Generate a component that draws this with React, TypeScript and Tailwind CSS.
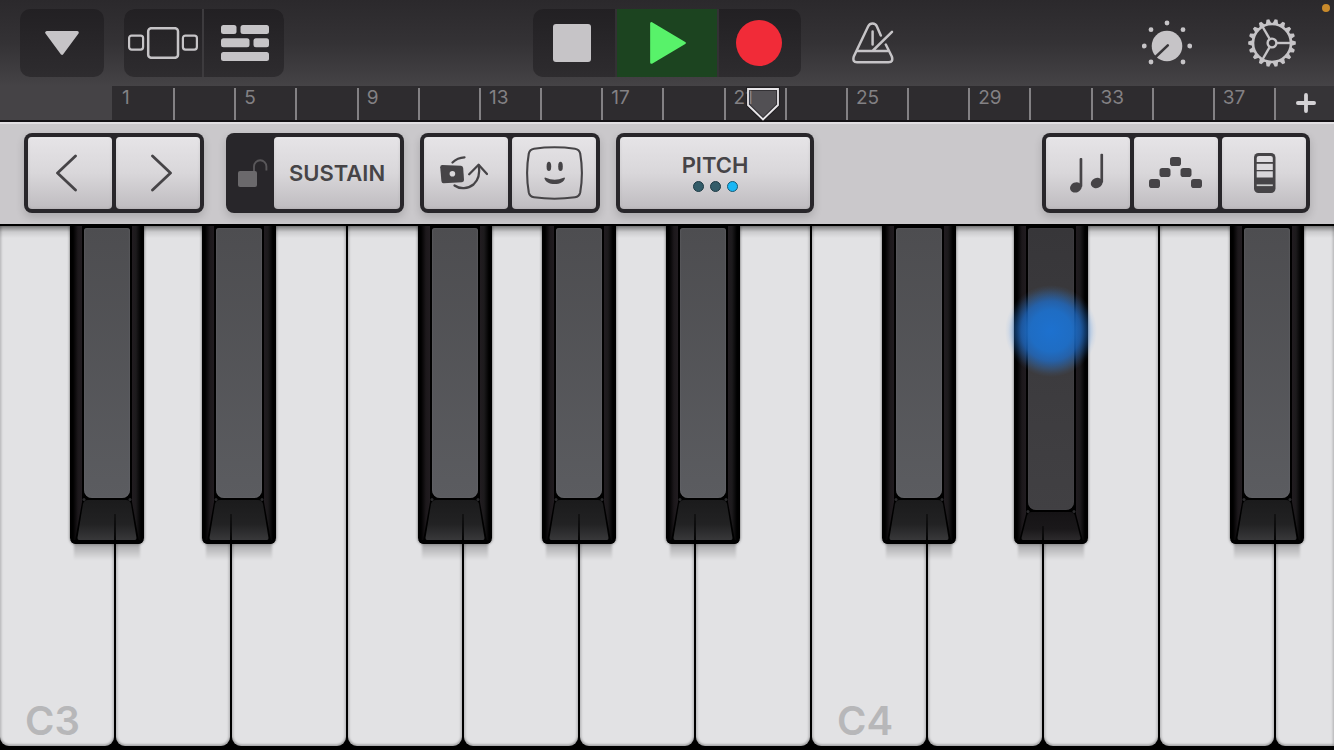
import React from "react";

const ICON = "#c6c4c7";
const DARK = "#464447";

const RULER_CELLS = Array.from({ length: 19 }, (_, i) => i);

const WHITE_KEYS = ["C3", "D3", "E3", "F3", "G3", "A3", "B3", "C4", "D4", "E4", "F4"];

// Horizontal offsets on a keyboard that spans 1334 units; seam is the gap of the white keys below.
const SPAN = 1334;
const BLACK_KEYS = [
  { name: "C#3", x: 70, seam: 45 },
  { name: "D#3", x: 202, seam: 29 },
  { name: "F#3", x: 418, seam: 45 },
  { name: "G#3", x: 542, seam: 37 },
  { name: "A#3", x: 666, seam: 29 },
  { name: "C#4", x: 882, seam: 45 },
  { name: "D#4", x: 1014, seam: 29, pressed: true },
  { name: "F#4", x: 1230, seam: 45 },
];

function GearIcon() {
  const teeth = Array.from({ length: 18 }, (_, i) => i * 20);
  return (
    <svg width="50" height="50" viewBox="-25 -25 50 50" fill="none" stroke={ICON}>
      <circle r="19" strokeWidth="2.6" />
      {teeth.map((a) => (
        <path key={a} d="M19 -2.9 L23.8 -1.4 V1.4 L19 2.9Z" fill={ICON} stroke="none" transform={`rotate(${a})`} />
      ))}
      <circle r="4.4" strokeWidth="2.4" />
      {[0, 120, 240].map((a) => (
        <path key={a} d="M5 0H18.5" strokeWidth="2.4" transform={`rotate(${a})`} />
      ))}
    </svg>
  );
}

function KnobIcon() {
  const dots = [[0, -23], [-16, -16.3], [16, -16.3], [-22.7, 0], [22.7, 0], [-16, 16], [16, 16]];
  return (
    <svg width="50" height="46" viewBox="-25 -26 50 46" fill={ICON}>
      <circle r="15.3" />
      {dots.map(([x, y]) => (
        <circle key={`${x},${y}`} cx={x} cy={y} r="2.4" />
      ))}
      <path d="M0.8 -0.6L-12.5 12" stroke="#39373a" strokeWidth="2.6" strokeLinecap="round" />
    </svg>
  );
}

function MetronomeIcon() {
  return (
    <svg width="42" height="42" viewBox="0 0 42 42" fill="none" stroke={ICON} strokeWidth="2.5" strokeLinecap="round" strokeLinejoin="round">
      <path d="M28.8 13.5L24.8 4.2Q23.6 1.4 20.6 1.4T16.2 4.2L1.8 34.5Q0.2 40.2 5 40.2H36.6Q41.6 40.2 39.8 34.5L33.8 22.5" />
      <path d="M5.5 29H35.5M20.6 9.5V22.5M21 28.5L40 9.8" />
    </svg>
  );
}

function CameraFlipIcon() {
  return (
    <svg width="48" height="34" viewBox="0 0 48 34" fill="none" stroke={DARK} strokeWidth="2.3" strokeLinecap="round" strokeLinejoin="round">
      <path d="M2.3 9L21 9.8Q23 10 23.2 12L24 24Q24 26 22 26.2L3.5 27.2Q1.6 27.2 1.4 25L0.2 11.2Q0.2 9 2.3 9Z" fill={DARK} stroke="none" />
      <circle cx="12.4" cy="17.8" r="2.8" fill="#dad8db" stroke="none" />
      <path d="M12.5 6.5Q17.5 1.7 24.5 1.4" />
      <path d="M14.5 29.5C20 33.5 28 33 33.5 28.5C38.5 24 40 17 38.8 9.5" />
      <path d="M29.2 18.2L38.6 8.8L47 18" />
    </svg>
  );
}

function FaceIcon() {
  return (
    <svg width="57" height="54" viewBox="0 0 57 54" fill="none" stroke={DARK} strokeWidth="2.1">
      <path d="M8 2.7Q28.5 -0.2 49 2.7Q53.3 3.4 54.2 7.5Q57.6 27 54.2 46.5Q53.3 50.6 49 51.3Q28.5 54.2 8 51.3Q3.7 50.6 2.8 46.5Q-0.6 27 2.8 7.5Q3.7 3.4 8 2.7Z" />
      <g fill={DARK} stroke="none">
        <ellipse cx="22.9" cy="20.4" rx="2.3" ry="4.6" />
        <ellipse cx="34.5" cy="20.4" rx="2.3" ry="4.6" />
        <path d="M18.4 32.2Q18.6 31.2 19.8 31.7Q28.7 35.6 37.6 31.7Q38.8 31.2 39 32.2C38 35.8 34 38 28.7 38S19.4 35.800 18.4 32.2Z" />
      </g>
    </svg>
  );
}

function LockIcon() {
  return (
    <svg width="30" height="28" viewBox="0 0 30 28" fill="none" aria-hidden="true">
      <rect y="12" width="19" height="16" rx="2" fill="#6b696c" />
      <path d="M16 12V7.500A6.200 6.200 0 0 1 28.400 7.500V11.500" stroke="#59575a" strokeWidth="1.900" />
    </svg>
  );
}

function NotesIcon() {
  return (
    <svg width="34" height="40" viewBox="0 0 34 40" fill={DARK}>
      <ellipse cx="5.9" cy="34.4" rx="6" ry="5" transform="rotate(-25 5.9 34.4)" />
      <rect x="9.6" y="5" width="2.7" height="29" rx="1" />
      <ellipse cx="26.7" cy="30" rx="6" ry="5" transform="rotate(-25 26.7 30)" />
      <rect x="30.4" y="0.7" width="2.7" height="29" rx="1" />
    </svg>
  );
}

function ArpeggioIcon() {
  const steps = [[0, 23], [10.5, 12], [21, 1], [31.5, 12], [42, 23]];
  return (
    <svg width="53" height="35" viewBox="0 0 53 35" fill={DARK}>
      {steps.map(([x, y]) => (
        <rect key={x} x={x} y={y} width="11" height="9" rx="2.8" />
      ))}
    </svg>
  );
}

function KeyboardSizeIcon() {
  return (
    <svg width="22" height="40" viewBox="0 0 22 40">
      <rect width="21.5" height="40" rx="4.5" fill={DARK} />
      <path d="M5 2.9H16.5Q18.8 2.9 18.8 5V9H2.7V5Q2.7 2.9 5 2.9Z" fill="#e0dee1" />
      <rect x="2.7" y="10.800" width="16.1" height="6.2" fill="#dcdadd" />
      <rect x="2.7" y="18.3" width="16.1" height="6.2" fill="#d8d6d9" />
      <rect x="2.7" y="31.4" width="16.1" height="1.7" fill="#ccc" />
    </svg>
  );
}

function HeaderButton({ label, className = "", children }: { label: string; className?: string; children: React.ReactNode }) {
  return (
    <button type="button" aria-label={label} className={`flex h-[68px] items-center justify-center ${className}`}>
      {children}
    </button>
  );
}

function Header() {
  const dark = "bg-linear-to-b from-[#222023] to-[#2e2c2f]";
  return (
    <header className="relative grid grid-cols-[1fr_auto_1fr] items-center bg-linear-to-b from-[#2b292c] via-[#343235] to-[#454346] py-[9px]">
      <div className="flex gap-5 pl-5">
        <HeaderButton label="Navigation menu" className={`w-[84px] rounded-[10px] ${dark}`}>
          <svg width="34" height="24" viewBox="0 0 34 24" fill={ICON} stroke={ICON} strokeWidth="3" strokeLinejoin="round">
            <path d="M1.7 1.6H32.3L17 22.3Z" />
          </svg>
        </HeaderButton>
        <div className="flex gap-[2px] overflow-hidden rounded-[10px] bg-[#3d3b3e]">
          <HeaderButton label="Sound browser" className={`w-[78px] ${dark}`}>
            <svg width="70" height="32" viewBox="0 0 70 32" fill="none" stroke={ICON} strokeWidth="2.2">
              <rect x="1.1" y="8.6" width="14" height="14" rx="2.5" />
              <rect x="20.2" y="1.2" width="29.8" height="29.6" rx="3" strokeWidth="2.5" />
              <rect x="54.9" y="8.6" width="14" height="14" rx="2.5" />
            </svg>
          </HeaderButton>
          <HeaderButton label="Tracks view" className={`w-[80px] pl-[2px] ${dark}`}>
            <svg width="48" height="36" viewBox="0 0 48 36" fill={ICON}>
              <rect width="15.5" height="9" rx="2.5" />
              <rect x="19.5" width="28.5" height="9" rx="2.5" />
              <rect y="13.3" width="28.5" height="9" rx="2.5" />
              <rect x="32.5" y="13.3" width="15.5" height="9" rx="2.5" />
              <rect y="27" width="48" height="9" rx="2.5" />
            </svg>
          </HeaderButton>
        </div>
      </div>

      <div className="flex gap-[2px] overflow-hidden rounded-[10px] bg-[#333134]">
        <HeaderButton label="Stop" className={`w-[82px] pr-1 ${dark}`}>
          <svg width="38" height="38" viewBox="0 0 38 38">
            <rect width="38" height="38" rx="3" fill={ICON} />
          </svg>
        </HeaderButton>
        <HeaderButton label="Play" className="w-[100px] bg-[#1c4420] pl-[2px]">
          <svg width="36" height="42" viewBox="0 0 36 42" fill="#58f26a" stroke="#58f26a" strokeWidth="2.5" strokeLinejoin="round">
            <path d="M1.4 1.4V40.6L34.6 21Z" />
          </svg>
        </HeaderButton>
        <HeaderButton label="Record" className={`w-[82px] pr-[2px] ${dark}`}>
          <svg width="46" height="46" viewBox="0 0 46 46">
            <circle cx="23" cy="23" r="23" fill="#f12b38" />
          </svg>
        </HeaderButton>
      </div>

      <div className="flex items-center pr-[37px] pl-[50px]">
        <HeaderButton label="Metronome" className="w-[44px]">
          <MetronomeIcon />
        </HeaderButton>
        <div className="ml-auto flex gap-[55px]">
          <HeaderButton label="Track controls">
            <KnobIcon />
          </HeaderButton>
          <HeaderButton label="Song settings">
            <GearIcon />
          </HeaderButton>
        </div>
      </div>
      <span className="absolute top-1 right-1 size-2 rounded-full bg-[#c98a2b]" />
    </header>
  );
}

function Ruler() {
  return (
    <div className="flex h-9 border-b-2 border-[#141215] bg-[#454346] pl-28">
      <div className="relative flex flex-1 bg-[#2e2c2f]">
        {RULER_CELLS.map((i) => (
          <div key={i} className="relative flex-1">
            {i > 0 && <span className="absolute top-[2px] bottom-0 left-0 w-[2px] bg-[#838184]" />}
            {i % 2 === 0 && <span className="block pl-[10px] text-[19px] leading-6 text-[#838184]">{i * 2 + 1}</span>}
          </div>
        ))}
        <svg className="absolute top-px left-[54.6%]" width="34" height="34" viewBox="0 0 34 34" aria-hidden="true">
          <path d="M2 2H32V18L17 32.5L2 18Z" fill="#8a888b" fillOpacity=".4" stroke="#141215" strokeWidth="4" strokeOpacity=".5" />
          <path d="M2 2H32V18L17 32.5L2 18Z" fill="none" stroke="#e8e6e9" strokeWidth="1.8" />
        </svg>
      </div>
      <button type="button" aria-label="Add section" className="relative flex w-[60px] items-center justify-center bg-[#363437] pl-1">
        <span className="absolute top-[2px] bottom-0 left-0 w-[2px] bg-[#838184]" />
        <svg width="20" height="20" viewBox="0 0 20 20" stroke="#d4d2d5" strokeWidth="3.8" strokeLinecap="round">
          <path d="M10 1.900V18.100M1.900 10H18.100" />
        </svg>
      </button>
    </div>
  );
}

function Group({ children }: { children: React.ReactNode }) {
  return (
    <div className="flex gap-1 rounded-lg bg-[#28262a] p-1 shadow-[0_4px_8px_rgba(0,0,0,0.16)]">{children}</div>
  );
}

function PadButton({ label, className = "w-[84px]", children }: { label: string; className?: string; children: React.ReactNode }) {
  return (
    <button
      type="button"
      aria-label={label}
      className={`flex h-[72px] flex-col items-center justify-center rounded-[4px] bg-linear-to-b from-[#e6e4e7] via-[#d9d7da] to-[#bfbcc0] text-[22px] leading-6 font-semibold text-[#464447] shadow-[inset_0_2px_2px_rgba(255,255,255,0.35),inset_0_0_3px_rgba(0,0,0,0.12)] ${className}`}
    >
      {children}
    </button>
  );
}

function Toolbar() {
  const chevron = { width: 21, height: 38, viewBox: "0 0 21 38", fill: "none", stroke: DARK, strokeWidth: 2.8, strokeLinecap: "round" as const, strokeLinejoin: "round" as const };
  return (
    <nav className="flex border-t-2 border-b-2 border-t-[#e2e0e3] border-b-black bg-[#cac8cb] px-6 pt-[9px] pb-[11px]">
      <Group>
        <PadButton label="Previous instrument">
          <svg {...chevron} className="mr-2"><path d="M19.500 2L1.500 19L19.500 36" /></svg>
        </PadButton>
        <PadButton label="Next instrument">
          <svg {...chevron} className="ml-1.5"><path d="M1.500 2L19.500 19L1.500 36" /></svg>
        </PadButton>
      </Group>
      <div className="ml-[22px] flex">
        <Group>
          <div className="flex w-10 items-center justify-center pl-1.5">
            <LockIcon />
          </div>
          <PadButton label="SUSTAIN" className="w-[126px]">SUSTAIN</PadButton>
        </Group>
      </div>
      <div className="ml-4 flex gap-4">
        <Group>
          <PadButton label="Flip camera" className="w-[84px] pr-1"><CameraFlipIcon /></PadButton>
          <PadButton label="Face control"><FaceIcon /></PadButton>
        </Group>
        <Group>
          <PadButton label="PITCH" className="w-[190px] pb-[2px]">
            PITCH
            <span className="mt-1 flex gap-[6px]">
              <span className="size-[11px] rounded-full border-[1px] border-[#1d3a45] bg-[#335c69]" />
              <span className="size-[11px] rounded-full border-[1px] border-[#1d3a45] bg-[#335c69]" />
              <span className="size-[11px] rounded-full border-[1px] border-[#155a75] bg-[#19b7f5]" />
            </span>
          </PadButton>
        </Group>
      </div>
      <div className="ml-auto flex">
        <Group>
          <PadButton label="Scale" className="w-[84px] pr-[2px]"><NotesIcon /></PadButton>
          <PadButton label="Arpeggiator" className="w-[84px] pr-[2px]"><ArpeggioIcon /></PadButton>
          <PadButton label="Keyboard layout" className="w-[84px] pl-[2px]"><KeyboardSizeIcon /></PadButton>
        </Group>
      </div>
    </nav>
  );
}

function BlackKey({ name, x, seam, pressed = false }: { name: string; x: number; seam: number; pressed?: boolean }) {
  const h = pressed ? 34 : 46;
  const id = `front-${x}`;
  return (
    <button
      type="button"
      aria-label={name}
      aria-pressed={pressed}
      className="absolute top-0 flex h-[60.7%] w-[74px] flex-col items-center rounded-b-[6px] bg-[linear-gradient(to_right,#000_3px,#1c181b_8px,#211c20_12px,#211c20_62px,#1c1a1c_66px,#000_71px)] shadow-[0_0_3px_rgba(0,0,0,0.6)]"
      style={{ left: `${(x / SPAN) * 100}%` }}
    >
      <span className="flex w-[50px] flex-1 bg-black px-[2px] pt-[2px]">
        <span
          className={`flex-1 rounded-t-[3px] rounded-b-[8px] ${
            pressed
              ? "bg-linear-to-b from-[#373639] to-[#414043] shadow-[inset_0_0_2px_#4a494c]"
              : "bg-linear-to-b from-[#4d4d50] to-[#5b5c60] shadow-[inset_0_0_2px_#6c6d70]"
          }`}
        />
      </span>
      <svg width="74" height={h} viewBox={`0 0 74 ${h}`} className="rounded-b-[6px]" aria-hidden="true">
        <defs>
          <linearGradient id={id} x1="0" y1="0" x2="0" y2="1">
            <stop offset="0" stopColor={pressed ? "#151315" : "#1b1b1c"} />
            <stop offset=".6" stopColor={pressed ? "#1a181a" : "#222223"} />
            <stop offset="1" stopColor={pressed ? "#2c2a2c" : "#38383a"} />
          </linearGradient>
        </defs>
        <path d={`M12 0H62V4L69 ${h - 3}H5L12 4Z`} fill="#000" />
        <path d={`M18 2H56Q60 2 61 6L66.5 ${h - 6}Q66.500 ${h - 4} 65 ${h - 4}H9Q7.500 ${h - 4} 7.500 ${h - 6}L13 6Q14 2 18 2Z`} fill={`url(#${id})`} />
        <circle cx="14" cy="1.5" r="1.5" fill="#2a2a2c" />
        <circle cx="60" cy="1.5" r="1.5" fill="#2a2a2c" />
        <path d={`M${seam - 1} ${h}L${seam - 0.4} 16H${seam + 0.4}L${seam + 1} ${h}Z`} fill="#000" />
        <rect y={h - 4} width="74" height="4" fill="#000" />
      </svg>
      <span className="absolute top-full right-1 left-1 h-4 bg-linear-to-b from-black/25 to-transparent blur-[1px]" />
    </button>
  );
}

function Keyboard() {
  const key =
    "flex items-end rounded-b-[9px] bg-[#e2e2e4] shadow-[inset_0_-2px_2px_rgba(0,0,0,0.2),inset_2px_0_2px_rgba(0,0,0,0.1),inset_-2px_0_2px_rgba(0,0,0,0.1)]";
  return (
    <main className="relative flex flex-1 gap-[2px] overflow-hidden bg-black pb-1">
      {WHITE_KEYS.map((name) => (
        <button key={name} type="button" aria-label={name} className={`basis-0 grow-[114] ${key}`}>
          {name.startsWith("C") && (
            <span className="pb-[3px] pl-[25px] text-[40px] leading-11 font-semibold text-[#b7b7b9]">{name}</span>
          )}
        </button>
      ))}
      <button type="button" aria-label="G4" className={`basis-0 grow-[58] ${key} rounded-br-none`} />
      <span className="pointer-events-none absolute inset-x-0 top-0 h-3 bg-linear-to-b from-black/45 via-black/10 to-transparent" />
      {BLACK_KEYS.map((k) => (
        <BlackKey key={k.name} {...k} />
      ))}
      <span
        className="pointer-events-none absolute top-[20%] size-[92px] -translate-x-1/2 -translate-y-1/2 rounded-full bg-[radial-gradient(closest-side,rgba(29,113,207,1)_0%,rgba(29,112,204,0.94)_45%,rgba(29,112,210,0.72)_65%,rgba(40,125,225,0.3)_82%,rgba(60,140,235,0.08)_93%,rgba(60,140,235,0)_100%)]"
        style={{ left: `${(1051 / SPAN) * 100}%` }}
      />
    </main>
  );
}

export default function App() {
  return (
    <div className="flex min-h-screen flex-col bg-black font-['Inter','Liberation_Sans',sans-serif] select-none">
      <Header />
      <Ruler />
      <Toolbar />
      <Keyboard />
    </div>
  );
}
